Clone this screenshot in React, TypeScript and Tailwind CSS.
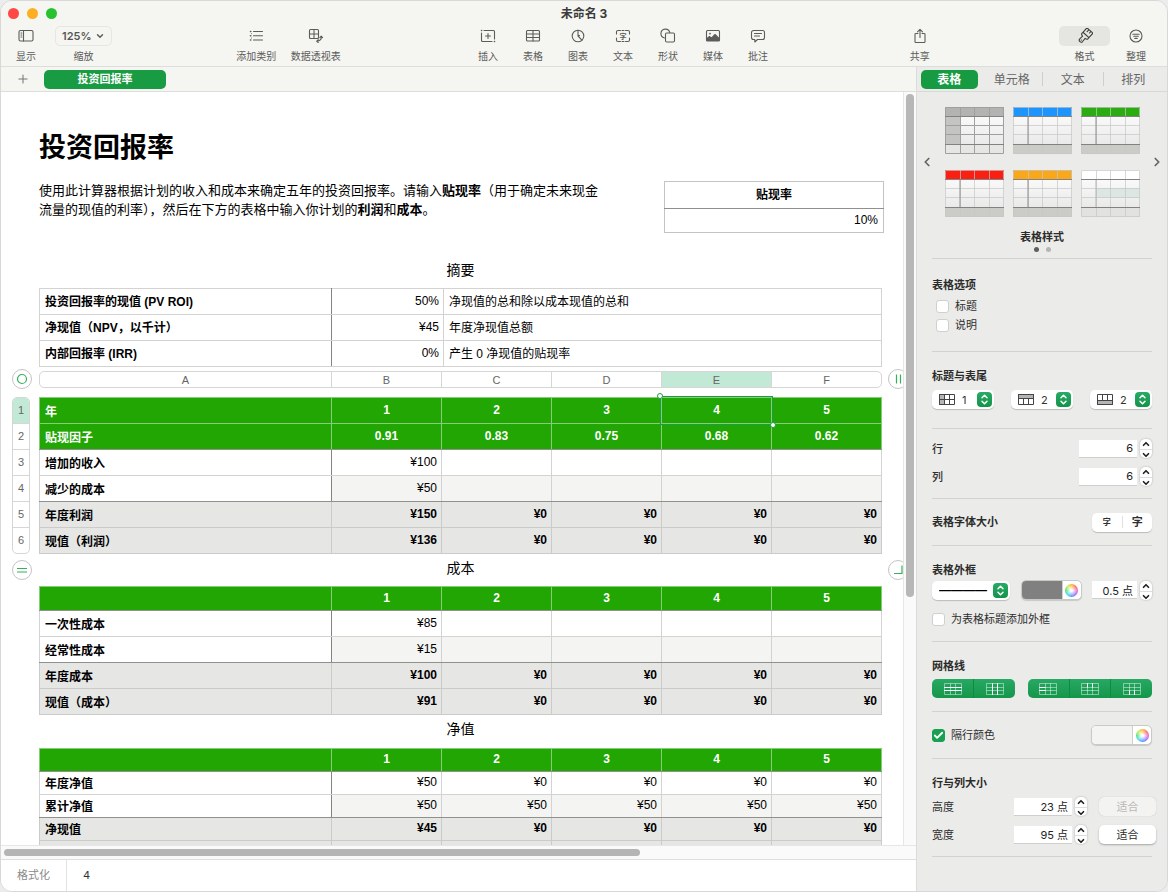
import { useState } from "react";
import type { ReactNode } from "react";
import { Check, ChevronDown, ChevronLeft, ChevronRight, ChevronUp, Plus } from "lucide-react";
import clsx from "clsx";

type Row = { label: string; cells: string[] };

const columns = ["A", "B", "C", "D", "E", "F"];

const profitTable = {
  header: [
    { label: "年", cells: ["1", "2", "3", "4", "5"] },
    { label: "贴现因子", cells: ["0.91", "0.83", "0.75", "0.68", "0.62"] },
  ],
  body: [
    { label: "增加的收入", cells: ["¥100", "", "", "", ""] },
    { label: "减少的成本", cells: ["¥50", "", "", "", ""] },
  ],
  footer: [
    { label: "年度利润", cells: ["¥150", "¥0", "¥0", "¥0", "¥0"] },
    { label: "现值（利润）", cells: ["¥136", "¥0", "¥0", "¥0", "¥0"] },
  ],
};

const costTable = {
  header: [{ label: "", cells: ["1", "2", "3", "4", "5"] }],
  body: [
    { label: "一次性成本", cells: ["¥85", "", "", "", ""] },
    { label: "经常性成本", cells: ["¥15", "", "", "", ""] },
  ],
  footer: [
    { label: "年度成本", cells: ["¥100", "¥0", "¥0", "¥0", "¥0"] },
    { label: "现值（成本）", cells: ["¥91", "¥0", "¥0", "¥0", "¥0"] },
  ],
};

const netTable = {
  header: [{ label: "", cells: ["1", "2", "3", "4", "5"] }],
  body: [
    { label: "年度净值", cells: ["¥50", "¥0", "¥0", "¥0", "¥0"] },
    { label: "累计净值", cells: ["¥50", "¥50", "¥50", "¥50", "¥50"] },
  ],
  footer: [
    { label: "净现值", cells: ["¥45", "¥0", "¥0", "¥0", "¥0"] },
    { label: "", cells: ["", "", "", "", ""] },
  ],
};

const summary = [
  { label: "投资回报率的现值 (PV ROI)", value: "50%", note: "净现值的总和除以成本现值的总和" },
  { label: "净现值（NPV，以千计）", value: "¥45", note: "年度净现值总额" },
  { label: "内部回报率 (IRR)", value: "0%", note: "产生 0 净现值的贴现率" },
];

/* ---------- Toolbar ---------- */

function Glyph({ children }: { children: ReactNode }) {
  return (
    <svg viewBox="0 0 16 16" className="w-4 h-4" fill="none" stroke="currentColor" strokeWidth="1.1" strokeLinecap="round" strokeLinejoin="round">
      {children}
    </svg>
  );
}

const glyphs: Record<string, ReactNode> = {
  view: (
    <Glyph>
      <rect x="1" y="2.5" width="14" height="10.5" rx="1.5" />
      <path d="M5.5 2.5v10.5M3 5h.8M3 7h.8M3 9h.8" />
    </Glyph>
  ),
  category: (
    <Glyph>
      <path d="M5.5 3.5h9M5.5 7.8h9M5.5 12h9" />
      <path d="M2.5 3.5h.3M2.5 7.8h.3M2.5 12h.3" strokeWidth="1.6" />
      <path d="M3.5 5.6h.1M3.5 10h.1" strokeWidth=".8" />
    </Glyph>
  ),
  pivot: (
    <Glyph>
      <rect x="1.5" y="1.5" width="9" height="9" rx="1" />
      <path d="M6 1.5v9M1.5 6h9" />
      <path d="M13.3 8.5c.3 2.8-1.4 4.700-4.300 4.700M11.800 9.700l1.400-1.600 1.400 1.600M10.300 11.700l-1.600 1.500 1.600 1.300" />
    </Glyph>
  ),
  insert: (
    <Glyph>
      <path d="M4 2.5h9.5a1 1 0 0 1 1 1v7.5M12 13.500H2.500a1 1 0 0 1-1-1V5M8 5.500v5M5.500 8h5" />
      <path d="M1.5 2.500h.2M14.400 13.500h.2" strokeWidth="1.5" />
    </Glyph>
  ),
  table: (
    <Glyph>
      <rect x="1.5" y="2.5" width="13" height="10.5" rx="1" />
      <path d="M8 2.5v10.5M1.5 6h13M1.5 9.5h13" />
    </Glyph>
  ),
  chart: (
    <Glyph>
      <circle cx="8" cy="8" r="5.8" />
      <path d="M8 2.200V8l3.900 4.100M8 8l1.500-.5" />
    </Glyph>
  ),
  text: (
    <Glyph>
      <path d="M1.500 6V4a1.500 1.500 0 0 1 1.500-1.500h2.500M7 2.500h2M10.500 2.500H13A1.500 1.500 0 0 1 14.500 4v2M14.500 10v2a1.500 1.500 0 0 1-1.500 1.500h-2.500M9 13.500H7M5.500 13.500H3A1.500 1.500 0 0 1 1.500 12v-2" />
      <text x="8" y="10.6" fontSize="7" fontWeight="700" textAnchor="middle" fill="currentColor" stroke="none">字</text>
    </Glyph>
  ),
  shape: (
    <Glyph>
      <path d="M4.500 10A4.500 4.500 0 1 1 9.800 4.500" />
      <rect x="5.5" y="5" width="9" height="9" rx="1.2" />
    </Glyph>
  ),
  media: (
    <Glyph>
      <rect x="1.5" y="2.5" width="13" height="10.5" rx="1" />
      <path d="M2 12.500v-2l2.500-2 2 1.600 3.500-3.600 4 4v2z" fill="currentColor" />
      <circle cx="5" cy="5.6" r=".9" fill="currentColor" stroke="none" />
    </Glyph>
  ),
  comment: (
    <Glyph>
      <path d="M3.500 2.500h9a2 2 0 0 1 2 2v5a2 2 0 0 1-2 2H7.500L4.800 14v-2.500H3.500a2 2 0 0 1-2-2v-5a2 2 0 0 1 2-2zM4.500 5.500h7M4.500 8h5" />
    </Glyph>
  ),
  share: (
    <Glyph>
      <path d="M6 5.500H3.800a.8.800 0 0 0-.8.800v7.400a.8.800 0 0 0 .8.800h8.400a.8.800 0 0 0 .8-.8V6.300a.8.800 0 0 0-.8-.8H10M8 9.500V1.500M5.500 3.800L8 1.300l2.500 2.500" />
    </Glyph>
  ),
  format: (
    <Glyph>
      <g transform="rotate(42 8 8)">
        <path d="M4 .6h8v6H4zM6.700 .8v2.600M9.300 .8v2M4 6.600v1.600c0 .9.700 1.300 2.300 1.500l-.2 4a1.900 1.900 0 0 0 3.800 0l-.2-4c1.600-.2 2.300-.6 2.300-1.500V6.600M8 13.400v.2" />
      </g>
    </Glyph>
  ),
  organize: (
    <Glyph>
      <circle cx="8" cy="8" r="6" />
      <path d="M4.800 6.200h6.400M5.700 8.300h4.600M6.800 10.400h2.400" />
    </Glyph>
  ),
};

function ToolButton({ icon, label, width = "w-[45px]", active }: { icon: string; label: string; width?: string; active?: boolean }) {
  return (
    <button className={clsx("flex flex-col items-center text-[10px] leading-4 text-[#5c5c5a] whitespace-nowrap", width)}>
      <span className={clsx("h-5 flex items-center justify-center rounded-[5px]", active && "w-full bg-[#e5e5e1] text-[#3f3f3d]")}>
        {glyphs[icon]}
      </span>
      <span className="mt-0.5">{label}</span>
    </button>
  );
}

function Toolbar() {
  return (
    <header className="bg-[#f5f5f1] border-b border-[#dddddb]">
      <div className="h-[25px] grid grid-cols-3 items-center px-[7px]">
        <div className="flex gap-2">
          <button aria-label="关闭" className="w-[11px] h-[11px] rounded-full bg-[#fe4845]" />
          <button aria-label="最小化" className="w-[11px] h-[11px] rounded-full bg-[#fdaf24]" />
          <button aria-label="缩放窗口" className="w-[11px] h-[11px] rounded-full bg-[#28c231]" />
        </div>
        <h1 className="text-center text-xs font-bold text-[#3b3b3b]">未命名 3</h1>
      </div>
      <div className="h-10 flex justify-between items-start pl-2.5 pr-4">
        <div className="flex gap-3.5">
          <ToolButton icon="view" label="显示" width="w-[30px]" />
          <label className="w-[57px] flex flex-col items-center text-[10px] leading-4 text-[#5c5c5a]">
            <span className="w-full h-5 flex items-center rounded-[5px] border border-[#e6e6e3] px-1.5">
              <select className="appearance-none flex-1 min-w-0 text-[11px] font-semibold text-[#555]">
                <option>125%</option>
                <option>100%</option>
              </select>
              <ChevronDown className="w-2.5 h-2.5 shrink-0" strokeWidth={3.5} />
            </span>
            <span className="mt-0.5">缩放</span>
          </label>
        </div>
        <div className="flex gap-3.5">
          <ToolButton icon="category" label="添加类别" width="w-10" />
          <ToolButton icon="pivot" label="数据透视表" width="w-[51px]" />
        </div>
        <div className="flex">
          <ToolButton icon="insert" label="插入" />
          <ToolButton icon="table" label="表格" />
          <ToolButton icon="chart" label="图表" />
          <ToolButton icon="text" label="文本" />
          <ToolButton icon="shape" label="形状" />
          <ToolButton icon="media" label="媒体" />
          <ToolButton icon="comment" label="批注" />
        </div>
        <ToolButton icon="share" label="共享" width="w-[30px]" />
        <div className="flex gap-[11px]">
          <ToolButton icon="format" label="格式" width="w-[51px]" active />
          <ToolButton icon="organize" label="整理" width="w-[30px]" />
        </div>
      </div>
    </header>
  );
}

/* ---------- Sheet ---------- */

function NumberCell({ children, className }: { children?: ReactNode; className?: string }) {
  return <td className={clsx("border p-0 pr-1 pb-0.5 text-right", className)}>{children}</td>;
}

function SheetTable({
  title,
  data,
  headHeight,
  rowHeight,
  selected,
}: {
  title: string;
  data: { header: Row[]; body: Row[]; footer: Row[] };
  headHeight: string;
  rowHeight: string;
  selected?: number;
}) {
  const lastHead = data.header.length - 1;
  const lastBody = data.body.length - 1;

  return (
    <table aria-label={title} className="w-full table-fixed border-collapse text-xs leading-4">
      <colgroup>
        <col />
        {columns.slice(1).map((c) => (
          <col key={c} className="w-[110px]" />
        ))}
      </colgroup>
      <thead className="bg-[#21a604] text-white">
        {data.header.map((row, r) => (
          <tr key={r} className={headHeight}>
            <th className={clsx("border border-[#86cd78] p-0 pl-[5px] pt-0.5 text-left", r === lastHead && "border-b-[#90908c]")}>
              {row.label}
            </th>
            {row.cells.map((cell, i) => (
              <th key={i} className={clsx("relative border border-[#86cd78] p-0 pb-0.5", r === lastHead && "border-b-[#90908c]")}>
                {cell}
                {selected === i && r === 0 && (
                  <span className="absolute -inset-0.5 border border-[#1b9c47]">
                    <i className="absolute -left-1 -top-1 w-1.5 h-1.5 rounded-full bg-white border border-[#1b9c47]" />
                    <i className="absolute -right-1 -bottom-1 w-1.5 h-1.5 rounded-full bg-white border border-[#1b9c47]" />
                  </span>
                )}
              </th>
            ))}
          </tr>
        ))}
      </thead>
      <tbody>
        {data.body.map((row, r) => (
          <tr key={r} className={rowHeight}>
            <th
              className={clsx(
                "border border-[#d3d3d1] border-r-[#85857f] p-0 pl-[5px] pt-0.5 text-left",
                r === lastBody && "border-b-[#90908c]",
              )}
            >
              {row.label}
            </th>
            {row.cells.map((cell, i) => (
              <NumberCell
                key={i}
                className={clsx(
                  "border-[#d3d3d1]",
                  r % 2 === 1 && "bg-[#f4f4f2]",
                  i === 0 && "border-l-[#85857f]",
                  r === lastBody && "border-b-[#90908c]",
                )}
              >
                {cell}
              </NumberCell>
            ))}
          </tr>
        ))}
      </tbody>
      <tfoot className="bg-[#e6e6e4]">
        {data.footer.map((row, r) => (
          <tr key={r} className={rowHeight}>
            <th className={clsx("border border-[#cbcbc9] p-0 pl-[5px] pt-0.5 text-left", r === 0 && "border-t-[#90908c]")}>
              {row.label}
            </th>
            {row.cells.map((cell, i) => (
              <NumberCell key={i} className={clsx("font-bold border-[#cbcbc9]", r === 0 && "border-t-[#90908c]")}>
                {cell}
              </NumberCell>
            ))}
          </tr>
        ))}
      </tfoot>
    </table>
  );
}

function RoundHandle({ label, children }: { label: string; children: ReactNode }) {
  return (
    <button aria-label={label} className="w-5 h-5 shrink-0 rounded-full border border-[#c4c4c4] bg-white flex items-center justify-center text-[#37b05c]">
      <svg viewBox="0 0 12 12" className="w-3 h-3" fill="none" stroke="currentColor" strokeWidth="1.2">
        {children}
      </svg>
    </button>
  );
}

// Row of the sheet with the selection gutters on both sides
function GutterRow({ left, right, children, className }: { left?: ReactNode; right?: ReactNode; children: ReactNode; className?: string }) {
  return (
    <div className={clsx("flex", className)}>
      <div className="w-[38px] shrink-0 pl-[11px] flex self-stretch items-[inherit]">{left}</div>
      <div className="flex-1 min-w-0">{children}</div>
      <div className="w-[21px] shrink-0 pl-1.5 flex overflow-hidden">{right}</div>
    </div>
  );
}

function Sheet() {
  return (
    <div className="flex-1 min-w-0 overflow-hidden bg-white text-black font-['Liberation_Sans','Noto_Sans_CJK_SC',sans-serif]">
      <GutterRow>
        <h2 className="pt-10 text-[27px] leading-8 font-bold">投资回报率</h2>
        <div className="mt-[17px] flex justify-between items-start">
          <p className="w-[566px] text-[13px] leading-[19px]">
            使用此计算器根据计划的收入和成本来确定五年的投资回报率。请输入<b>贴现率</b>（用于确定未来现金
            <br />
            流量的现值的利率），然后在下方的表格中输入你计划的<b>利润</b>和<b>成本</b>。
          </p>
          <table aria-label="贴现率" className="w-[220px] -mr-0.5 border-collapse text-xs leading-4">
            <tbody>
              <tr className="h-[27px]">
                <th className="border border-[#c4c4c2] border-b-[#90908c] p-0">贴现率</th>
              </tr>
              <tr className="h-6">
                <td className="border border-[#c4c4c2] border-t-[#90908c] p-0 pr-[5px] pb-0.5 text-right">10%</td>
              </tr>
            </tbody>
          </table>
        </div>
        <h3 className="h-[55px] flex items-end justify-center pb-2 text-sm leading-5">摘要</h3>
        <table aria-label="摘要" className="w-full table-fixed border-collapse text-xs leading-4">
          <colgroup>
            <col className="w-[292px]" />
            <col className="w-28" />
            <col />
          </colgroup>
          <tbody>
            {summary.map((row) => (
              <tr key={row.label} className="h-[26px]">
                <th className="border border-[#d3d3d1] border-r-[#85857f] p-0 pl-[5px] text-left">{row.label}</th>
                <NumberCell className="border-[#d3d3d1] border-l-[#85857f]">{row.value}</NumberCell>
                <td className="border border-[#d3d3d1] p-0 pl-[5px]">{row.note}</td>
              </tr>
            ))}
          </tbody>
        </table>
      </GutterRow>

      <GutterRow
        className="h-[30px] pt-0.5 items-start"
        left={<RoundHandle label="选择整个表格"><circle cx="6" cy="6" r="4.5" /></RoundHandle>}
        right={<RoundHandle label="添加列"><path d="M4.500 1.500v9M8.500 1.500v9" /></RoundHandle>}
      >
        <div className="mt-0.5 h-[17px] flex rounded-[5px] border border-[#d6d6d6] overflow-hidden text-[11px] leading-4 text-[#666]">
          {columns.map((c) => (
            <button
              key={c}
              className={clsx(
                c === "A" ? "flex-1" : "w-[110px] border-l border-[#d6d6d6]",
                c === "E" && "bg-[#c2e9d5]",
              )}
            >
              {c}
            </button>
          ))}
        </div>
      </GutterRow>

      <GutterRow
        left={
          <div className="w-[18px] flex flex-col rounded-[5px] border border-[#d6d6d6] overflow-hidden text-[11px] text-[#666]">
            {[1, 2, 3, 4, 5, 6].map((n) => (
              <button key={n} className={clsx("flex-1", n === 1 ? "bg-[#c2e9d5]" : "border-t border-[#d6d6d6]")}>
                {n}
              </button>
            ))}
          </div>
        }
      >
        <SheetTable title="利润" data={profitTable} headHeight="h-[26px]" rowHeight="h-[26px]" selected={3} />
      </GutterRow>

      <GutterRow
        className="h-8 items-center"
        left={<div className="flex items-center"><RoundHandle label="添加行"><path d="M1 4.500h10M1 8h10" /></RoundHandle></div>}
        right={<RoundHandle label="添加行和列"><path d="M2 9.500h8V1.500" /></RoundHandle>}
      >
        <h3 className="pb-1 text-sm leading-5 text-center">成本</h3>
      </GutterRow>

      <GutterRow>
        <SheetTable title="成本" data={costTable} headHeight="h-6" rowHeight="h-[26px]" />
        <h3 className="h-[33px] pt-1 text-sm leading-5 text-center">净值</h3>
        <SheetTable title="净值" data={netTable} headHeight="h-[23px]" rowHeight="h-[23px]" />
      </GutterRow>
    </div>
  );
}

/* ---------- Inspector ---------- */

function StyleThumb({ name, head, side, foot = "#cbcbc8", strong, tint }: { name: string; head: string; side?: string; foot?: string; strong?: boolean; tint?: string }) {
  return (
    <button aria-label={name} className="w-[59px] h-[47px] bg-linear-to-b from-white to-[#e4e4e3]">
      <svg viewBox="0 0 59 47" className="w-full h-full">
        {side && <rect y="9" width="15" height="28" fill={side} />}
        {tint && <rect x="15" y="18" width="44" height="10" fill={tint} />}
        <rect width="59" height="9.5" fill={head} />
        <rect y="37.5" width="59" height="9.5" fill={foot} />
        <path d="M.5.5h58v46H.5zM15.500 0v47M29.500 0v47M44.500 0v47M0 18.500h59M0 27.500h59" fill="none" stroke={strong ? "#a0a0a0" : "#c6c6c6"} strokeOpacity={strong ? 1 : 0.7} />
        <path d="M0 9.500h59M0 37.500h59" stroke="#84827e" />
        {!strong && <path d="M15 10v27" stroke={tint ? "#b5b5b5" : "#8f8d89"} />}
      </svg>
    </button>
  );
}

function Checkbox({ label, defaultChecked }: { label: string; defaultChecked?: boolean }) {
  const [checked, setChecked] = useState(!!defaultChecked);
  return (
    <label className="flex items-center gap-1.5">
      <span className="relative w-[13px] h-[13px]">
        <input
          type="checkbox"
          checked={checked}
          onChange={(e) => setChecked(e.target.checked)}
          className="block appearance-none w-[13px] h-[13px] rounded-[3px] border border-[#d0d0ce] bg-white checked:bg-[#1b9f52] checked:border-[#1b9f52]"
        />
        {checked && <Check className="absolute inset-0 w-[13px] h-[13px] p-px text-white pointer-events-none" strokeWidth={4} />}
      </span>
      {label}
    </label>
  );
}

function PopupArrows() {
  return (
    <span className="w-[15px] h-[15px] shrink-0 rounded-[4px] bg-linear-to-b from-[#28ab66] to-[#12934a] flex items-center justify-center pointer-events-none">
      <svg viewBox="0 0 9 13" className="w-[9px] h-[13px]" fill="none" stroke="white" strokeWidth="1.5" strokeLinecap="round" strokeLinejoin="round">
        <path d="M2 4.800L4.500 2.300 7 4.800M2 8.200l2.500 2.500L7 8.200" />
      </svg>
    </span>
  );
}

function CountSelect({ label, value, children }: { label: string; value: string; children: ReactNode }) {
  return (
    <div className="w-[62px] h-[19px] flex items-center rounded-[5px] bg-white shadow-[0_1px_1px_rgba(0,0,0,0.2)] pl-[7px] pr-0.5">
      <svg viewBox="0 0 16 11" className="w-4 h-[11px] shrink-0" fill="none" stroke="#444">
        {children}
      </svg>
      <select aria-label={label} defaultValue={value} className="appearance-none flex-1 min-w-0 pl-[7px] text-[11px] leading-4 text-[#333]">
        <option>0</option>
        <option>1</option>
        <option>2</option>
      </select>
      <PopupArrows />
    </div>
  );
}

function Stepper({ label }: { label: string }) {
  return (
    <span className="w-3 h-[19px] ml-[3px] shrink-0 flex flex-col rounded-[5px] bg-white shadow-[0_0_2px_rgba(0,0,0,0.3)] text-[#222]">
      <button aria-label={`增加${label}`} className="flex-1 flex items-center justify-center border-b border-[#ddd]">
        <ChevronUp className="w-2.5 h-2.5" strokeWidth={4} />
      </button>
      <button aria-label={`减少${label}`} className="flex-1 flex items-center justify-center">
        <ChevronDown className="w-2.5 h-2.5" strokeWidth={4} />
      </button>
    </span>
  );
}

function ValueField({ label, value, width = "w-[58px]" }: { label: string; value: string; width?: string }) {
  return (
    <span className="flex items-center">
      <input
        aria-label={label}
        defaultValue={value}
        className={clsx("h-[18px] bg-white border-b border-[#cfcfcd] pr-1 text-right text-[11px] text-[#222]", width)}
      />
      <Stepper label={label} />
    </span>
  );
}

function ColorWell({ label, color }: { label: string; color: string }) {
  return (
    <span className="w-[61px] h-5 flex rounded-[5px] border border-[#c9c9c7] bg-white overflow-hidden shadow-[0_1px_1px_rgba(0,0,0,0.15)]">
      <button aria-label={label} className={clsx("flex-1", color)} />
      <button aria-label={`${label}色盘`} className="w-[19px] flex items-center justify-center border-l border-[#d0d0d0]">
        <span className="w-[13px] h-[13px] rounded-full bg-[radial-gradient(circle,#fff_10%,transparent_75%),conic-gradient(#ffb020,#ff5a30,#f04fd0,#8a5cff,#3f8cff,#2fd8e8,#35dc6a,#c9e838,#ffb020)]" />
      </button>
    </span>
  );
}

function GridButton({ label, bright, last }: { label: string; bright: string; last?: boolean }) {
  return (
    <button aria-label={label} className={clsx("flex-1 flex items-center justify-center", !last && "border-r border-[#0f8a44]")}>
      <svg viewBox="0 0 18 12" className="w-[18px] h-3" fill="none" stroke="#ffffff">
        <path d="M.5.5h17v11H.5zM.5 4.500h17M.5 7.500h17M6.500.5v11M11.500.5v11" strokeOpacity=".45" />
        <path d={bright} />
      </svg>
    </button>
  );
}

const heading = "text-[11px] leading-4 font-bold text-[#2b2b2b]";
const fitButton = "w-[57px] h-[19px] ml-3 rounded-[5px] text-[11px] leading-4";

function Inspector() {
  const [tab, setTab] = useState("表格");
  return (
    <aside className="w-[251px] shrink-0 flex flex-col bg-[#ebebe9] border-l border-[#dcdcda] text-[11px] leading-4 text-[#2f2f2f]">
      <nav className="h-[25px] grid grid-cols-4 items-center px-1 border-b border-[#d8d8d6]">
        {["表格", "单元格", "文本", "排列"].map((t, i) => (
          <div key={t} className={clsx("flex items-center", i > 1 && "border-l border-[#cfcfcd] h-3.5")}>
            <button
              onClick={() => setTab(t)}
              className={clsx(
                "flex-1 h-[19px] text-xs leading-[19px] rounded-[5px]",
                t === tab ? "mr-1 bg-[#169b42] text-white font-bold" : "text-[#666]",
              )}
            >
              {t}
            </button>
          </div>
        ))}
      </nav>

      <div className="flex-1 px-[15px] divide-y divide-[#d2d2d0]">
        <section className="h-[167px] flex flex-col items-center pt-[15px]">
          <div className="self-stretch -mx-3 flex items-center justify-between">
            <button aria-label="上一页"><ChevronLeft className="w-3.5 h-3.5 text-[#666]" strokeWidth={3} /></button>
            <div className="grid grid-cols-3 gap-x-[9px] gap-y-4">
              <StyleThumb name="灰色样式" head="#b3b3b2" side="#c4c4c3" foot="#e6e6e5" strong />
              <StyleThumb name="蓝色样式" head="#1e95fd" />
              <StyleThumb name="绿色样式" head="#2bad12" />
              <StyleThumb name="红色样式" head="#f91f12" />
              <StyleThumb name="橙色样式" head="#f9a71b" />
              <StyleThumb name="素色样式" head="#ffffff" foot="#e2e2e1" tint="#dce6e3" />
            </div>
            <button aria-label="下一页"><ChevronRight className="w-3.5 h-3.5 text-[#666]" strokeWidth={3} /></button>
          </div>
          <h3 className={clsx(heading, "mt-3")}>表格样式</h3>
          <div className="flex gap-[7px] mt-0.5">
            <i className="w-[5px] h-[5px] rounded-full bg-[#5e5e5e]" />
            <i className="w-[5px] h-[5px] rounded-full bg-[#b5b5b3]" />
          </div>
        </section>

        <section className="h-[93px] pt-[18px]">
          <h3 className={heading}>表格选项</h3>
          <div className="mt-[5px] pl-1 flex flex-col gap-[3px]">
            <Checkbox label="标题" />
            <Checkbox label="说明" />
          </div>
        </section>

        <section className="h-[77px] pt-4">
          <h3 className={heading}>标题与表尾</h3>
          <div className="mt-1.5 flex justify-between">
            <CountSelect label="标题列" value="1">
              <path d="M.5.5h5v10h-5z" fill="#b5b5b5" />
              <path d="M.5.5h15v10H.5zM5.500.5v10M10.500.5v10M.5 5.500h15" />
            </CountSelect>
            <CountSelect label="标题行" value="2">
              <path d="M.5.5h15v4H.5z" fill="#b5b5b5" />
              <path d="M.5.5h15v10H.5zM5.500 4.500v6M10.500 4.500v6" />
            </CountSelect>
            <CountSelect label="表尾行" value="2">
              <path d="M.5 6.500h15v4H.5z" fill="#b5b5b5" />
              <path d="M.5.5h15v10H.5zM5.500.5v6M10.500.5v6" />
            </CountSelect>
          </div>
        </section>

        <section className="h-[70px] pt-2.5 flex flex-col gap-[9px]">
          <div className="flex items-center justify-between">
            <span className="font-medium">行</span>
            <ValueField label="行" value="6" />
          </div>
          <div className="flex items-center justify-between">
            <span className="font-medium">列</span>
            <ValueField label="列" value="6" />
          </div>
        </section>

        <section className="h-[47px] flex items-center justify-between">
          <h3 className={heading}>表格字体大小</h3>
          <div className="w-[60px] h-[19px] flex items-center rounded-[5px] bg-white divide-x divide-[#e0e0e0] shadow-[0_1px_1px_rgba(0,0,0,0.2)] font-bold">
            <button className="flex-1 text-[8px] leading-3">字</button>
            <button className="flex-1 text-[11px] leading-3">字</button>
          </div>
        </section>

        <section className="h-24 pt-4">
          <h3 className={heading}>表格外框</h3>
          <div className="mt-0.5 flex items-center justify-between">
            <div className="w-[78px] h-[19px] flex items-center rounded-[5px] bg-white shadow-[0_1px_1px_rgba(0,0,0,0.2)] pl-[7px] pr-0.5">
              <select aria-label="外框线型" className="appearance-none flex-1 min-w-0 text-xs leading-4 font-bold text-black font-['Liberation_Sans',sans-serif]">
                <option>————</option>
              </select>
              <PopupArrows />
            </div>
            <ColorWell label="外框颜色" color="bg-[#808080]" />
            <ValueField label="外框粗细" value="0.5 点" width="w-[45px]" />
          </div>
          <div className="mt-[11px]">
            <Checkbox label="为表格标题添加外框" />
          </div>
        </section>

        <section className="h-[70px] pt-4">
          <h3 className={heading}>网格线</h3>
          <div className="mt-[5px] flex gap-[13px] text-white">
            <div className="w-[83px] h-[19px] flex rounded-[5px] bg-linear-to-b from-[#27a964] to-[#14964a]">
              <GridButton label="正文行网格线" bright="M0 4.500h18M0 7.500h18" />
              <GridButton label="正文列网格线" bright="M6.500 0v12M11.500 0v12" last />
            </div>
            <div className="flex-1 h-[19px] flex rounded-[5px] bg-linear-to-b from-[#27a964] to-[#14964a]">
              <GridButton label="标题列网格线" bright="M0 4.500h6.500M0 7.500h6.500" />
              <GridButton label="标题行网格线" bright="M6.500 0v4.500M11.500 0v4.500" />
              <GridButton label="表尾行网格线" bright="M6.500 7.500v4.500M11.500 7.500v4.500" last />
            </div>
          </div>
        </section>

        <section className="h-[47px] flex items-center justify-between">
          <Checkbox label="隔行颜色" defaultChecked />
          <ColorWell label="隔行填充" color="bg-[#f4f4f2]" />
        </section>

        <section className="h-[98px] pt-4">
          <h3 className={heading}>行与列大小</h3>
          <div className="-mr-1 mt-1.5 flex flex-col gap-[9px]">
            <div className="flex items-center">
              <span className="flex-1">高度</span>
              <ValueField label="高度" value="23 点" />
              <button disabled className={clsx(fitButton, "bg-[#f3f3f1] text-[#b9b9b7] shadow-[0_0_1px_rgba(0,0,0,0.25)]")}>适合</button>
            </div>
            <div className="flex items-center">
              <span className="flex-1">宽度</span>
              <ValueField label="宽度" value="95 点" />
              <button className={clsx(fitButton, "bg-white shadow-[0_1px_2px_rgba(0,0,0,0.3)]")}>适合</button>
            </div>
          </div>
        </section>
        <div />
      </div>
    </aside>
  );
}

export default function App() {
  return (
    <div className="h-screen bg-[#ececec] font-['Inter','Noto_Sans_CJK_SC',sans-serif]">
      <div className="h-full flex flex-col rounded-xl border border-[#d8d8d8] overflow-hidden">
        <Toolbar />
        <div className="flex-1 min-h-0 flex">
          <main className="flex-1 min-w-0 flex flex-col">
            <div className="h-[25px] shrink-0 flex items-center bg-[#f5f5f1] border-b border-[#dddddb]">
              <button aria-label="添加工作表" className="w-[43px] flex justify-center text-[#777]">
                <Plus className="w-3.5 h-3.5" strokeWidth={1.8} />
              </button>
              <button className="w-[122px] h-[19px] rounded-[5px] bg-[#199b43] text-white text-[11px] leading-4 font-bold">投资回报率</button>
            </div>
            <div className="flex-1 min-h-0 flex">
              <Sheet />
              <div className="w-[13px] shrink-0 bg-[#fafafa] border-l border-[#e6e6e6] px-0.5 pt-0.5">
                <div className="h-[67%] rounded-full bg-[#b7b7b7]" />
              </div>
            </div>
            <div className="h-3.5 shrink-0 bg-[#fafafa] border-t border-[#e6e6e6] px-[3px] pt-[3px]">
              <div className="w-[70%] h-[7px] rounded-full bg-[#b5b5b5]" />
            </div>
            <footer className="h-8 shrink-0 flex items-center bg-white border-t border-[#dedede] text-[11px]">
              <span className="w-[66px] h-full flex items-center justify-center border-r border-[#e2e2e2] text-[#8a8a8a]">格式化</span>
              <input aria-label="单元格值" defaultValue="4" className="flex-1 pl-4 text-[#333] outline-none" />
            </footer>
          </main>
          <Inspector />
        </div>
      </div>
    </div>
  );
}
